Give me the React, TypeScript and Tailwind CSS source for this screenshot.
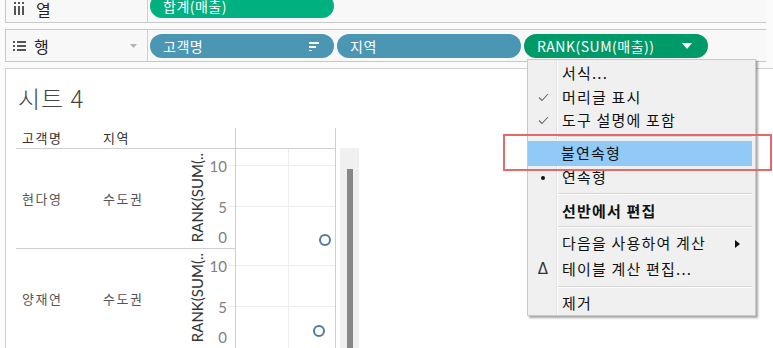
import React from "react";

const ko = "font-['Noto_Sans_CJK_KR','Noto_Sans',sans-serif]";

function ColumnsIcon() {
  return (
    <svg width="12" height="14" viewBox="0 0 12 14" className="shrink-0">
      <rect x="1" y="0" width="2" height="2" fill="#555" />
      <rect x="5" y="0" width="2" height="2" fill="#555" />
      <rect x="9" y="0" width="2" height="2" fill="#555" />
      <rect x="1" y="4" width="2" height="9" fill="#555" />
      <rect x="5" y="4" width="2" height="9" fill="#555" />
      <rect x="9" y="4" width="2" height="9" fill="#555" />
    </svg>
  );
}

function RowsIcon() {
  return (
    <svg width="13" height="12" viewBox="0 0 13 12" className="shrink-0">
      <rect x="0" y="1" width="2" height="2" fill="#555" />
      <rect x="4" y="1" width="9" height="2" fill="#555" />
      <rect x="0" y="5" width="2" height="2" fill="#555" />
      <rect x="4" y="5" width="9" height="2" fill="#555" />
      <rect x="0" y="9" width="2" height="2" fill="#555" />
      <rect x="4" y="9" width="9" height="2" fill="#555" />
    </svg>
  );
}

function SortIcon() {
  return (
    <svg width="11" height="10" viewBox="0 0 11 10">
      <rect x="0" y="1" width="10" height="2" fill="#fff" />
      <rect x="0" y="5" width="7" height="2" fill="#fff" />
      <rect x="0" y="9" width="3" height="1.5" fill="#fff" />
    </svg>
  );
}

function Pill({ label, color, children }: { label: string; color: string; children?: React.ReactNode }) {
  return (
    <div className={`w-[184px] h-[24px] rounded-full flex items-center pl-[13px] pr-[14px] text-white text-[14px] tracking-[0.5px] ${color}`}>
      <span className="leading-none">{label}</span>
      <div className="ml-auto flex items-center">{children}</div>
    </div>
  );
}

function Check() {
  return (
    <svg width="11" height="9" viewBox="0 0 11 9">
      <polyline points="1,4.5 4,7.5 10,1" fill="none" stroke="#666" strokeWidth="1.1" />
    </svg>
  );
}

type Item = {
  label: string;
  icon?: React.ReactNode;
  bold?: boolean;
  active?: boolean;
  sub?: boolean;
  h: string;
};

function MenuRow({ item }: { item: Item }) {
  return (
    <div className={`flex items-stretch mr-[3px] ${item.h} ${item.active ? "bg-[#91c9f7]" : ""}`}>
      <div className={`w-[29px] flex items-center justify-center pl-[2px] ${item.active ? "" : "border-r border-[#e2e2e2]"}`}>
        {item.icon}
      </div>
      <div className={`flex-1 flex items-center pl-[4px] ${item.active ? "" : "border-l border-white"}`}>
        <span className={`text-[15px] tracking-[1.2px] text-[#111] ${item.bold ? "font-bold" : ""}`}>{item.label}</span>
        {item.sub && (
          <svg width="5" height="8" viewBox="0 0 5 8" className="ml-auto mr-[12px]">
            <polygon points="0,0 5,4 0,8" fill="#111" />
          </svg>
        )}
      </div>
    </div>
  );
}

function Sep({ h }: { h: string }) {
  return (
    <div className={`flex items-center mr-[3px] ${h}`}>
      <div className="w-[29px] self-stretch border-r border-[#e2e2e2]" />
      <div className="flex-1 self-stretch flex flex-col justify-center border-l border-white">
        <div className="h-px bg-[#d6d6d6]" />
        <div className="h-px bg-white" />
      </div>
    </div>
  );
}

function ContextMenu() {
  return (
    <div className={`absolute left-[527px] top-[59px] w-[229px] bg-[#f0f0f0] border border-[#c9c9c9] shadow-[2px_2px_2px_rgba(0,0,0,0.35)] pt-[1px] pb-[1px] ${ko}`}>
      <MenuRow item={{ label: "서식...", h: "h-[24px]" }} />
      <MenuRow item={{ label: "머리글 표시", icon: <Check />, h: "h-[24px]" }} />
      <MenuRow item={{ label: "도구 설명에 포함", icon: <Check />, h: "h-[23px]" }} />
      <Sep h="h-[9px]" />
      <MenuRow item={{ label: "불연속형", active: true, h: "h-[25px]" }} />
      <MenuRow item={{ label: "연속형", icon: <span className="w-[4px] h-[4px] rounded-full bg-[#111]" />, h: "h-[23px]" }} />
      <Sep h="h-[10px]" />
      <MenuRow item={{ label: "선반에서 편집", bold: true, h: "h-[24px]" }} />
      <Sep h="h-[8px]" />
      <MenuRow item={{ label: "다음을 사용하여 계산", sub: true, h: "h-[25px]" }} />
      <MenuRow item={{ label: "테이블 계산 편집...", icon: <span className="font-['DejaVu_Sans',sans-serif] text-[15px] text-[#333] leading-none">Δ</span>, h: "h-[26px]" }} />
      <Sep h="h-[10px]" />
      <MenuRow item={{ label: "제거", h: "h-[22px]" }} />
    </div>
  );
}

function Pane({ point }: { point: { x: number; y: number } }) {
  return (
    <div className="relative h-full">
      <div className="absolute left-[52px] top-0 bottom-0 w-px bg-[#ededed]" />
      <div className="absolute left-0 right-0 top-[16px] h-px bg-[#ededed]" />
      <div className="absolute left-0 right-0 top-[57px] h-px bg-[#ededed]" />
      <div
        className="absolute w-[12px] h-[12px] rounded-full border-2 border-[#4e79a7]"
        style={{ left: point.x - 6, top: point.y - 6 }}
      />
    </div>
  );
}

function Tick({ top, label }: { top: string; label: string }) {
  return (
    <div className={`absolute right-[8px] left-[26px] h-[18px] flex items-center justify-end font-['Lato',sans-serif] text-[15px] text-[#808080] ${top}`}>
      {label}
    </div>
  );
}

function DataRow({ name, region }: { name: string; region: string }) {
  return (
    <div className="h-[100px] flex border-b border-[#cfcfcf]">
      <div className="w-[81px] flex items-center pl-[6px] text-[13px] tracking-[1.5px] text-[#555]">{name}</div>
      <div className="w-[83px] flex items-center pl-[6px] text-[13px] tracking-[1.5px] text-[#555]">{region}</div>
      <div className="relative w-[55px]">
        <div className="absolute left-[6px] top-[3px] h-[92px] flex items-center">
          <span className="[writing-mode:vertical-rl] rotate-180 font-['Lato',sans-serif] text-[15px] text-[#333] whitespace-nowrap">
            RANK(SUM(..
          </span>
        </div>
        <Tick top="top-[8px]" label="10" />
        <Tick top="top-[49px]" label="5" />
        <Tick top="top-[79px]" label="0" />
        <div className="absolute right-0 w-[7px] top-[16px] h-px bg-[#ededed]" />
        <div className="absolute right-0 w-[7px] top-[57px] h-px bg-[#ededed]" />
      </div>
    </div>
  );
}

export default function App() {
  return (
    <div className={`relative w-[773px] h-[348px] overflow-hidden bg-[#fbfbfb] ${ko}`}>
      {/* 열 shelf */}
      <div className="ml-[5px] mr-[7px] -mt-[10px] h-[33px] flex border-l border-b border-[#c8c8c8] bg-[#f8f8f8]">
        <div className="w-[142px] border-r border-[#cfcfcf] flex items-center pl-[7px] pt-[6px]">
          <ColumnsIcon />
          <span className="ml-[11px] text-[16px] text-[#222] leading-none">열</span>
        </div>
        <div className="flex items-center pl-[2px]">
          <Pill label="합계(매출)" color="bg-[#00b17f]" />
        </div>
      </div>

      {/* 행 shelf */}
      <div className="ml-[5px] mr-[7px] mt-[6px] h-[33px] flex border-l border-t border-b border-[#c8c8c8] bg-[#f8f8f8]">
        <div className="w-[142px] border-r border-[#cfcfcf] flex items-center pl-[7px]">
          <RowsIcon />
          <span className="ml-[8px] text-[16px] text-[#222] leading-none">행</span>
          <svg width="7" height="4" viewBox="0 0 7 4" className="ml-auto mr-[10px]">
            <polygon points="0,0 7,0 3.5,4" fill="#b3b3b3" />
          </svg>
        </div>
        <div className="flex items-center gap-[3px] pl-[2px]">
          <Pill label="고객명" color="bg-[#4b97b3]">
            <SortIcon />
          </Pill>
          <Pill label="지역" color="bg-[#4b97b3]" />
          <Pill label="RANK(SUM(매출))" color="bg-[#009a68]">
            <svg width="10" height="6" viewBox="0 0 10 6" className="mr-[2px]">
              <polygon points="0,0 10,0 5,6" fill="#fff" />
            </svg>
          </Pill>
        </div>
      </div>

      {/* sheet */}
      <div className="ml-[5px] mt-[6px] h-[300px] border-l border-t border-[#d0d0d0] bg-white flex flex-col">
        <div className="mt-[13px] ml-[12px] h-[32px] flex items-center text-[24px] font-light text-[#444] tracking-[1px]">시트 4</div>
        <div className="mt-[14px] ml-[10px] flex">
          <div className="w-[219px] flex flex-col">
            <div className="h-[21px] flex items-center border-b border-[#cfcfcf] text-[13px] tracking-[1.5px] text-[#333]">
              <span className="w-[81px] pl-[6px]">고객명</span>
              <span className="pl-[6px]">지역</span>
            </div>
            <DataRow name="현다영" region="수도권" />
            <DataRow name="양재연" region="수도권" />
          </div>
          <div className="w-[101px] border-l border-r border-[#cfcfcf] flex flex-col">
            <div className="h-[21px] border-b border-[#cfcfcf]" />
            <div className="h-[100px]">
              <Pane point={{ x: 89, y: 91 }} />
            </div>
            <div className="h-[100px]">
              <Pane point={{ x: 83, y: 82 }} />
            </div>
          </div>
          <div className="ml-[4px] mt-[20px] w-[19px] h-[220px] bg-[#f0f0f0] flex justify-center pt-[21px]">
            <div className="w-[6px] h-full bg-[#888]" />
          </div>
        </div>
      </div>

      <ContextMenu />
      <div className="absolute left-[503px] top-[134px] w-[269px] h-[37px] border-2 border-[#e46a6a]" />
    </div>
  );
}
